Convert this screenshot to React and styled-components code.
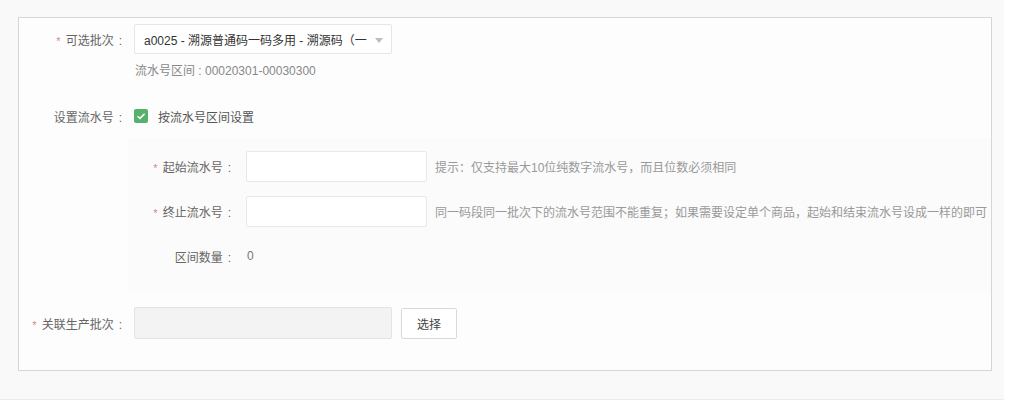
import React from "react";
import styled, { createGlobalStyle } from "styled-components";

const Global = createGlobalStyle`
  html, body { margin: 0; padding: 0; background: #ffffff; }
  body { font-family: "Liberation Sans", "Noto Sans CJK SC", sans-serif; }
`;

const Page = styled.div`
  width: 1004px;
  height: 400px;
  box-sizing: border-box;
  background: #f9f9f9;
  border-bottom: 1px solid #ececec;
  padding: 17px 0 0 18px;
`;

const Panel = styled.div`
  width: 974px;
  height: 354px;
  box-sizing: border-box;
  border: 1px solid #d6d6d6;
  background: #fdfdfd;
  padding-top: 6px;
  display: flex;
  flex-direction: column;
`;

const Row = styled.div`
  display: flex;
  align-items: center;
  margin-top: ${(p) => p.$mt || 0}px;
  height: ${(p) => p.$h || 30}px;
`;

const Label = styled.div`
  width: ${(p) => p.$w || 103}px;
  flex: none;
  text-align: right;
  font-size: 12px;
  color: #666;
  margin-right: ${(p) => p.$gap || 12}px;
  white-space: nowrap;
`;

const Star = styled.span`
  color: #d08a8a;
  margin-right: 5px;
  font-size: 11px;
`;

const Colon = styled.span`
  margin-left: 5px;
`;

const Select = styled.div`
  position: relative;
  flex: none;
  width: 258px;
  height: 30px;
  box-sizing: border-box;
  border: 1px solid #e6e6e6;
  border-radius: 2px;
  background: #fff;
  display: flex;
  align-items: center;
  padding-left: 9px;
  font-size: 12px;
  color: #333;
  white-space: nowrap;
  overflow: hidden;
`;

const Caret = styled.span`
  position: absolute;
  right: 8px;
  top: 13px;
  width: 0;
  height: 0;
  border-left: 4px solid transparent;
  border-right: 4px solid transparent;
  border-top: 5px solid #bdbdbd;
`;

const SubText = styled.div`
  margin: 9px 0 0 116px;
  height: 16px;
  line-height: 16px;
  font-size: 12px;
  color: #888;
`;

const Check = styled.span`
  flex: none;
  width: 14px;
  height: 14px;
  border-radius: 2px;
  background: #56b16c;
  display: inline-flex;
  align-items: center;
  justify-content: center;
  margin-right: 10px;
`;

const CheckText = styled.span`
  font-size: 12px;
  color: #555;
`;

const Nested = styled.div`
  margin: 12px 0 0 109px;
  padding: 13px 0 26px;
  background: #fbfbfb;
  display: flex;
  flex-direction: column;
`;

const Input = styled.div`
  flex: none;
  width: ${(p) => p.$w}px;
  height: ${(p) => p.$h}px;
  box-sizing: border-box;
  border: 1px solid ${(p) => (p.$disabled ? "#e3e3e3" : "#e8e8e8")};
  border-radius: 2px;
  background: ${(p) => (p.$disabled ? "#f3f3f3" : "#fff")};
`;

const Hint = styled.div`
  margin-left: 8px;
  font-size: 12px;
  color: #999;
  white-space: nowrap;
`;

const Value = styled.div`
  font-size: 12px;
  color: #777;
`;

const Button = styled.button`
  flex: none;
  margin-left: 9px;
  width: 56px;
  height: 31px;
  box-sizing: border-box;
  border: 1px solid #d9d9d9;
  border-radius: 2px;
  background: #fff;
  font-family: inherit;
  font-size: 12px;
  color: #444;
  padding: 0;
`;

export default function App() {
  return (
    <>
      <Global />
      <Page>
        <Panel>
          <Row>
            <Label>
              <Star>*</Star>可选批次<Colon>:</Colon>
            </Label>
            <Select>
              a0025 - 溯源普通码一码多用 - 溯源码（一
              <Caret />
            </Select>
          </Row>
          <SubText>流水号区间 : 00020301-00030300</SubText>
          <Row $mt={27} $h={20}>
            <Label>
              设置流水号<Colon>:</Colon>
            </Label>
            <Check>
              <svg width="12" height="12" viewBox="0 0 12 12">
                <path d="M2.5 6.2 L5 8.4 L9.6 3.8" fill="none" stroke="#fff" strokeWidth="1.5" />
              </svg>
            </Check>
            <CheckText>按流水号区间设置</CheckText>
          </Row>
          <Nested>
            <Row $h={31}>
              <Label $gap={15}>
                <Star>*</Star>起始流水号<Colon>:</Colon>
              </Label>
              <Input $w={181} $h={31} />
              <Hint>提示：仅支持最大10位纯数字流水号，而且位数必须相同</Hint>
            </Row>
            <Row $h={31} $mt={14}>
              <Label $gap={15}>
                <Star>*</Star>终止流水号<Colon>:</Colon>
              </Label>
              <Input $w={181} $h={31} />
              <Hint>同一码段同一批次下的流水号范围不能重复；如果需要设定单个商品，起始和结束流水号设成一样的即可</Hint>
            </Row>
            <Row $h={20} $mt={19}>
              <Label $gap={16}>
                区间数量<Colon>:</Colon>
              </Label>
              <Value>0</Value>
            </Row>
          </Nested>
          <Row $h={32} $mt={15}>
            <Label>
              <Star>*</Star>关联生产批次<Colon>:</Colon>
            </Label>
            <Input $w={258} $h={32} $disabled />
            <Button>选择</Button>
          </Row>
        </Panel>
      </Page>
    </>
  );
}
